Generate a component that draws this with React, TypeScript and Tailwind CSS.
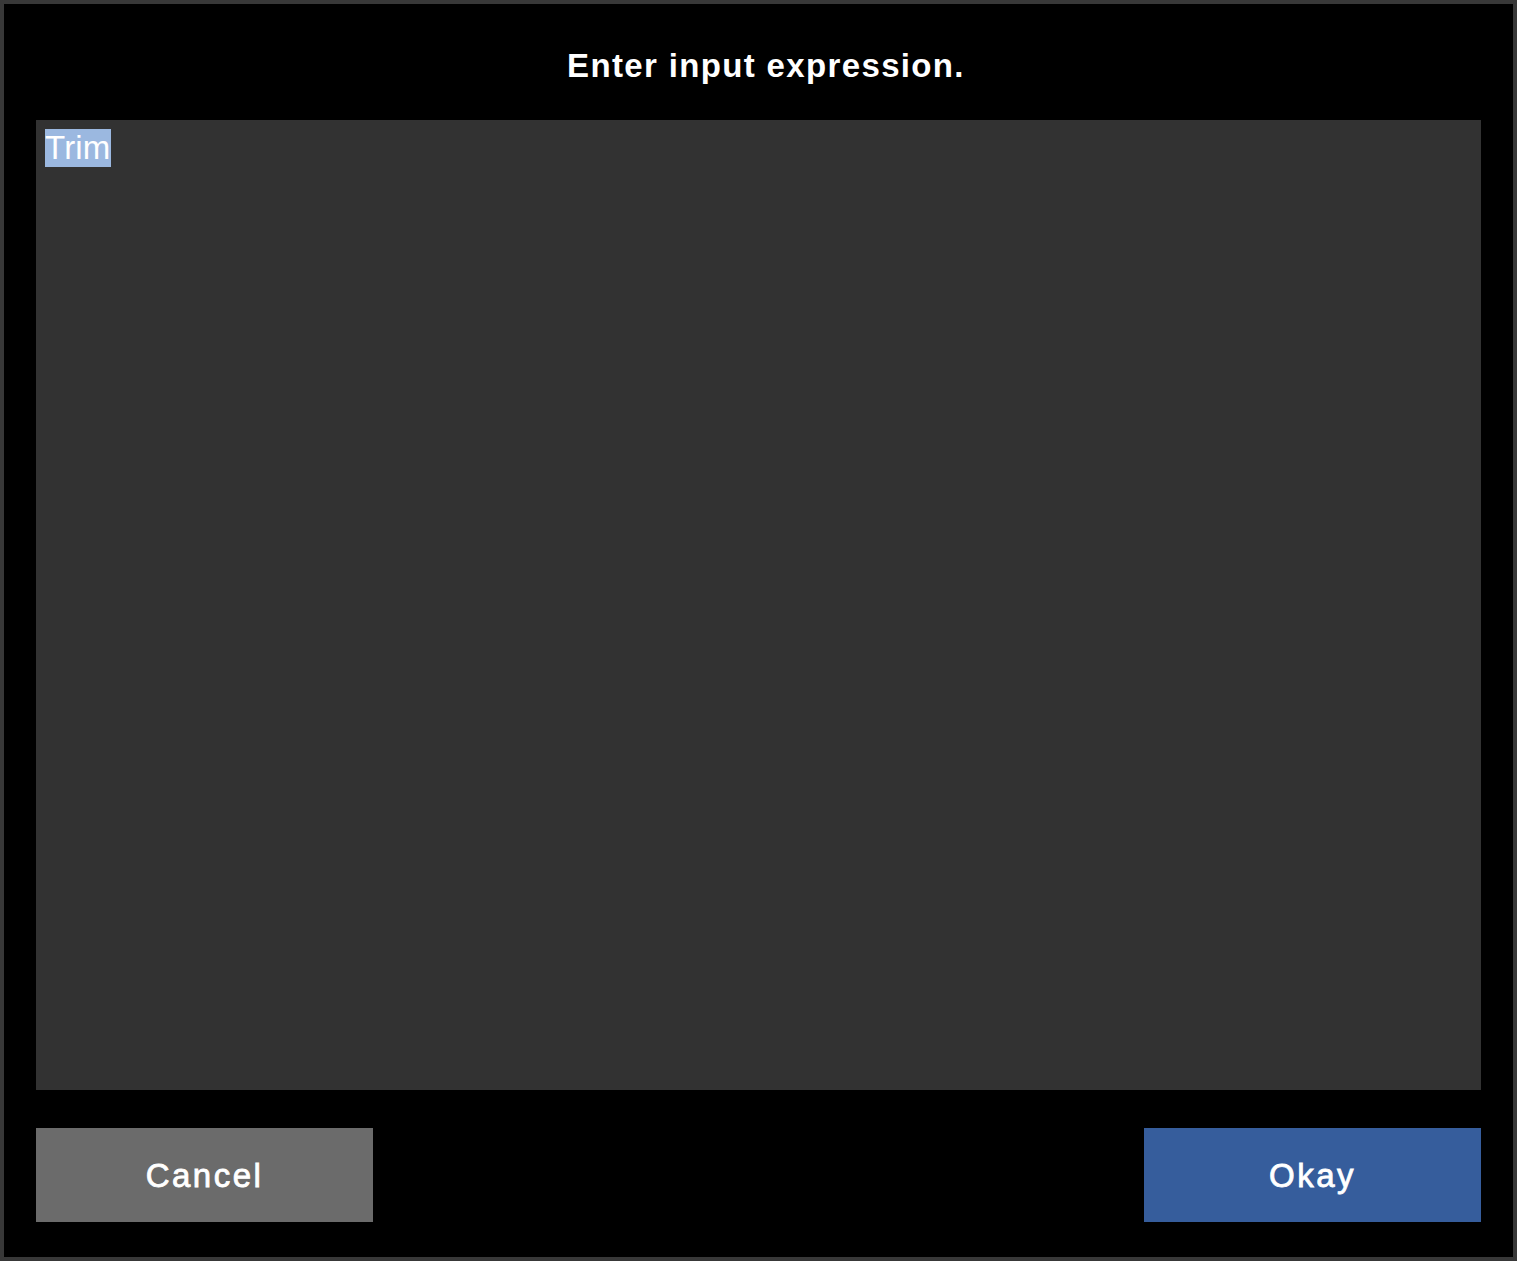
export default function App() {
  return (
    <div className="h-[1261px] w-full bg-black border-4 border-[#383838] flex flex-col px-8 font-['Liberation_Sans',Arial,sans-serif] text-white">
      {/* Header */}
      <div className="h-[116px] flex items-center justify-center pl-[15px] pt-[8px]">
        <h1 className="text-[33px] font-bold tracking-[1.35px]">Enter input expression.</h1>
      </div>

      {/* Expression field */}
      <div className="h-[970px] bg-[#323232] p-[9px]">
        <span className="bg-[#9bb8e0] text-[33px] leading-[38px] tracking-[0.2px] inline-block">Trim</span>
      </div>

      {/* Actions */}
      <div className="mt-[38px] flex justify-between">
        <button className="w-[337px] h-[94px] bg-[#6b6b6b] text-[33px] tracking-[2.5px] text-white pt-[2px] [-webkit-text-stroke:0.8px_white]">
          Cancel
        </button>
        <button className="w-[337px] h-[94px] bg-[#365d9c] text-[33px] tracking-[2.5px] text-white pt-[2px] [-webkit-text-stroke:0.8px_white]">
          Okay
        </button>
      </div>
    </div>
  )
}
